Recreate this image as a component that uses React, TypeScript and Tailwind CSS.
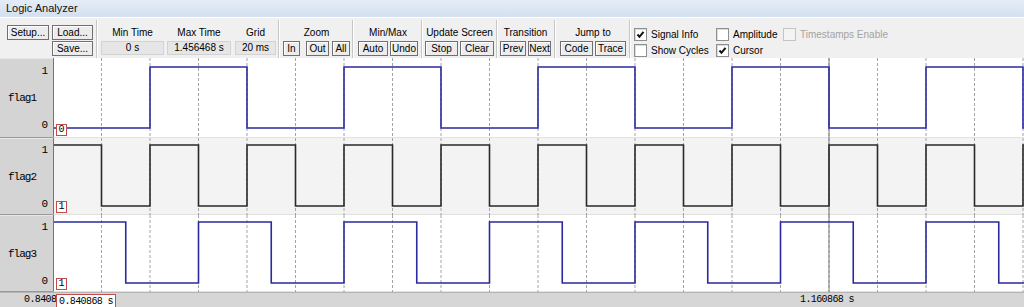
import type { ReactNode } from "react";

const GRID = 48.5;
const X0 = 53;
const gx = (k: number) => X0 + GRID * k;
const CURSOR_X = gx(16);

type Signal = {
  name: string;
  startHigh: boolean;
  step: number;
  color: string;
  height: number;
  hi: number;
  lo: number;
  rowClass: string;
  labelTop: string;
  labelBottom: string;
  bg: string;
};

const signals: Signal[] = [
  { name: "flag1", startHigh: false, step: 2, color: "#2a2a9e", height: 80, hi: 9, lo: 70, rowClass: "h-[80px]", labelTop: "pt-[6px]", labelBottom: "pb-[6px]", bg: "bg-white" },
  { name: "flag2", startHigh: true, step: 1, color: "#2a2a2a", height: 77, hi: 7, lo: 68, rowClass: "h-[77px]", labelTop: "pt-[5px]", labelBottom: "pb-[4px]", bg: "bg-[#f3f3f3]" },
  { name: "flag3", startHigh: true, step: 1.5, color: "#2a2a9e", height: 77, hi: 7, lo: 68, rowClass: "h-[77px]", labelTop: "pt-[5px]", labelBottom: "pb-[4px]", bg: "bg-white" },
];

function wavePath(s: Signal) {
  let high = s.startHigh;
  let d = `M54 ${high ? s.hi : s.lo}`;
  for (let k = s.step; gx(k) < 1024; k += s.step) {
    high = !high;
    d += ` H${gx(k)} V${high ? s.hi : s.lo}`;
  }
  return d + " H1024";
}

function Btn({ children, className = "" }: { children: ReactNode; className?: string }) {
  return (
    <button
      className={`flex h-[15px] items-center justify-center border border-[#707070] bg-[#ececec] text-[10px] leading-none text-black shadow-[inset_1px_1px_0_#ffffff] ${className}`}
    >
      {children}
    </button>
  );
}

function Sep({ className = "" }: { className?: string }) {
  return <div className={`mt-[2px] h-[38px] w-[2px] border-l border-r border-l-[#c6c6c6] border-r-white ${className}`} />;
}

function Field({ label, value, className = "" }: { label: string; value: string; className?: string }) {
  return (
    <div className={`mt-[7px] flex flex-col ${className}`}>
      <div className="h-[16px] whitespace-nowrap text-center leading-[16px]">{label}</div>
      <div className="h-[14px] border border-[#d2d2d2] bg-[#e6e6e6] text-center leading-[12px]">{value}</div>
    </div>
  );
}

function Group({ label, children, className = "" }: { label: string; children: ReactNode; className?: string }) {
  return (
    <div className={`mt-[7px] flex flex-col items-center ${className}`}>
      <div className="h-[16px] whitespace-nowrap leading-[16px]">{label}</div>
      <div className="flex">{children}</div>
    </div>
  );
}

function Check({ label, checked = false, disabled = false }: { label: string; checked?: boolean; disabled?: boolean }) {
  return (
    <div className="flex h-[13px] items-center gap-[4px] whitespace-nowrap">
      <div
        className={`flex h-[13px] w-[13px] items-center justify-center border ${
          disabled ? "border-[#c4c4c4] bg-[#f4f4f4]" : "border-[#8e8f8f] bg-white shadow-[inset_1px_1px_0_#dcdcdc]"
        }`}
      >
        {checked ? (
          <svg width="9" height="9" viewBox="0 0 9 9">
            <path d="M1.5 4.5 L3.5 6.8 L7.5 1.8" fill="none" stroke="#111" strokeWidth="2" />
          </svg>
        ) : null}
      </div>
      <span className={disabled ? "text-[#a3a3a3]" : "text-black"}>{label}</span>
    </div>
  );
}

function SignalRow({ s }: { s: Signal }) {
  const grid = [];
  for (let k = 1; gx(k) <= 1024; k++) grid.push(gx(k));
  return (
    <div className={`flex ${s.rowClass}`}>
      <div className="flex w-[53px] flex-col border-b border-t border-b-[#9a9a9a] border-t-[#e6e6e6] bg-[#d4d4d4] font-['Liberation_Mono',monospace] text-[11px] text-black">
        <div className={`pr-[5px] text-right leading-[12px] ${s.labelTop}`}>1</div>
        <div className="flex flex-1 items-center pl-[8px] tracking-[-1px]">{s.name}</div>
        <div className={`pr-[5px] text-right leading-[12px] ${s.labelBottom}`}>0</div>
      </div>
      <div className={`relative flex-1 border-b border-l border-b-[#e2e2e2] border-l-[#6464f2] ${s.bg}`}>
        <svg width="970" height={s.height} viewBox={`54 0 970 ${s.height}`} className="block">
          {grid.map((x) => (
            <line key={x} x1={x} x2={x} y1={0} y2={s.height} stroke="#a4a4a4" strokeDasharray="3 2" />
          ))}
          <line x1={CURSOR_X} x2={CURSOR_X} y1={0} y2={s.height} stroke="#7c7c7c" />
          <path d={wavePath(s)} fill="none" stroke={s.color} strokeWidth="1.6" />
        </svg>
        <div className="absolute bottom-[1px] left-[2px] flex h-[12px] w-[11px] items-center justify-center border border-[#c44c4c] bg-white font-['Liberation_Mono',monospace] text-[10px] leading-none text-black">
          {s.startHigh ? "1" : "0"}
        </div>
      </div>
    </div>
  );
}

export default function App() {
  return (
    <div className="h-[307px] w-[1024px] overflow-hidden bg-[#f0f0f0] font-['Liberation_Sans',Arial,sans-serif] text-[10px] text-black">
      <div className="flex h-[18px] items-center border-b border-white bg-gradient-to-b from-[#e4ecf7] to-[#d4e0ef] pl-[6px] text-[11px] text-[#111]">
        Logic Analyzer
      </div>

      <div className="flex h-[40px] items-start">
        <div className="ml-[7px] mt-[7px] grid grid-cols-[42px_41px] gap-x-[3px] gap-y-[1px]">
          <Btn>Setup...</Btn>
          <Btn>Load...</Btn>
          <div />
          <Btn>Save...</Btn>
        </div>
        <Sep className="ml-[3px]" />
        <Field label="Min Time" value="0 s" className="ml-[3px] w-[63px]" />
        <Field label="Max Time" value="1.456468 s" className="ml-[3px] w-[64px]" />
        <Field label="Grid" value="20 ms" className="ml-[4px] w-[41px]" />
        <Sep className="ml-[2px]" />
        <Group label="Zoom" className="ml-[3px]">
          <Btn className="w-[17px]">In</Btn>
          <Btn className="ml-[6px] w-[23px]">Out</Btn>
          <Btn className="ml-[3px] w-[18px]">All</Btn>
        </Group>
        <Sep className="ml-[2px]" />
        <Group label="Min/Max" className="ml-[4px]">
          <Btn className="w-[30px]">Auto</Btn>
          <Btn className="ml-[2px] w-[28px]">Undo</Btn>
        </Group>
        <Sep className="ml-[3px]" />
        <Group label="Update Screen" className="ml-[2px]">
          <Btn className="w-[33px]">Stop</Btn>
          <Btn className="ml-[2px] w-[34px]">Clear</Btn>
        </Group>
        <Sep className="ml-[2px]" />
        <Group label="Transition" className="ml-[2px]">
          <Btn className="w-[26px]">Prev</Btn>
          <Btn className="ml-[2px] w-[23px]">Next</Btn>
        </Group>
        <Sep className="ml-[3px]" />
        <Group label="Jump to" className="ml-[4px]">
          <Btn className="w-[33px]">Code</Btn>
          <Btn className="ml-[2px] w-[31px]">Trace</Btn>
        </Group>
        <Sep className="ml-[3px]" />
        <div className="ml-[3px] mt-[10px] grid grid-cols-[82px_67px_auto] gap-y-[3px]">
          <Check label="Signal Info" checked />
          <Check label="Amplitude" />
          <Check label="Timestamps Enable" disabled />
          <Check label="Show Cycles" />
          <Check label="Cursor" checked />
        </div>
      </div>

      {signals.map((s) => (
        <SignalRow key={s.name} s={s} />
      ))}

      <div className="relative flex h-[15px] border-t border-[#b4b4b4] bg-[#d6d6d6] font-['Liberation_Mono',monospace] text-[10px] leading-[14px] tracking-[-0.6px] text-black">
        <div className="ml-[24px] w-[32px] overflow-hidden whitespace-nowrap">0.840868 s</div>
        <div className="absolute left-[56px] top-[1px] h-[16px] whitespace-nowrap border border-[#c44c4c] bg-white px-[2px] leading-[13px]">
          0.840868 s
        </div>
        <span className="absolute left-[800px] top-0 whitespace-nowrap">1.160868 s</span>
      </div>
    </div>
  );
}
